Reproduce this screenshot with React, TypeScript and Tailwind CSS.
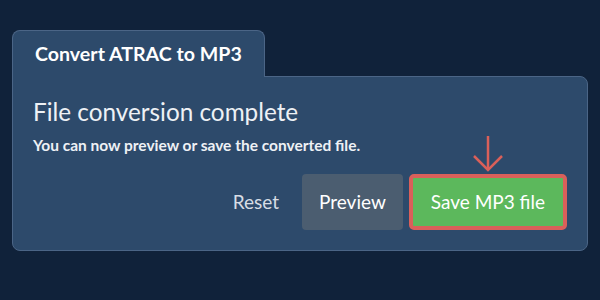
export default function App() {
  return (
    <div
      className="w-[600px] h-[300px] bg-[#10223a] px-[12px] pt-[30px]"
      style={{ fontFamily: "Lato, 'Noto Sans', sans-serif" }}
    >
      {/* Tab */}
      <div className="relative z-10 -mb-px flex h-[47px] w-[253px] items-center rounded-t-lg border border-b-0 border-[#4b6586] bg-[#2d4a6b] pl-[22px]">
        <h1 className="text-[19.6px] font-bold text-white">Convert ATRAC to MP3</h1>
      </div>

      {/* Panel */}
      <div className="h-[175px] rounded-b-lg rounded-tr-lg border border-[#4b6586] bg-[#2d4a6b] px-[20px] pt-[20px]">
        <h2 className="text-[24.3px] leading-[29px] text-[#eef1f5]">File conversion complete</h2>
        <p className="mt-[8px] text-[15.5px] font-bold text-[#eef1f5]">
          You can now preview or save the converted file.
        </p>

        <div className="mt-[17px] flex items-center justify-end gap-[6px]">
          <button className="h-[56px] px-[17px] text-[19px] text-[#d7dde5]">Reset</button>
          <button className="h-[56px] rounded-[4px] bg-[#4b5d70] px-[17px] text-[19px] text-white">
            Preview
          </button>
          <div className="relative">
            <svg
              className="absolute left-1/2 top-[-38px] -translate-x-1/2"
              width="32"
              height="36"
              viewBox="0 0 32 36"
              fill="none"
              stroke="#d9605a"
              strokeWidth="2.5"
            >
              <line x1="16" y1="0" x2="16" y2="33" />
              <polyline points="2,20 16,34 30,20" />
            </svg>
            <button className="h-[56px] rounded-[5px] border-[4px] border-[#d9605a] bg-[#5cb85c] px-[18px] text-[19px] text-white">
              Save MP3 file
            </button>
          </div>
        </div>
      </div>
    </div>
  );
}
